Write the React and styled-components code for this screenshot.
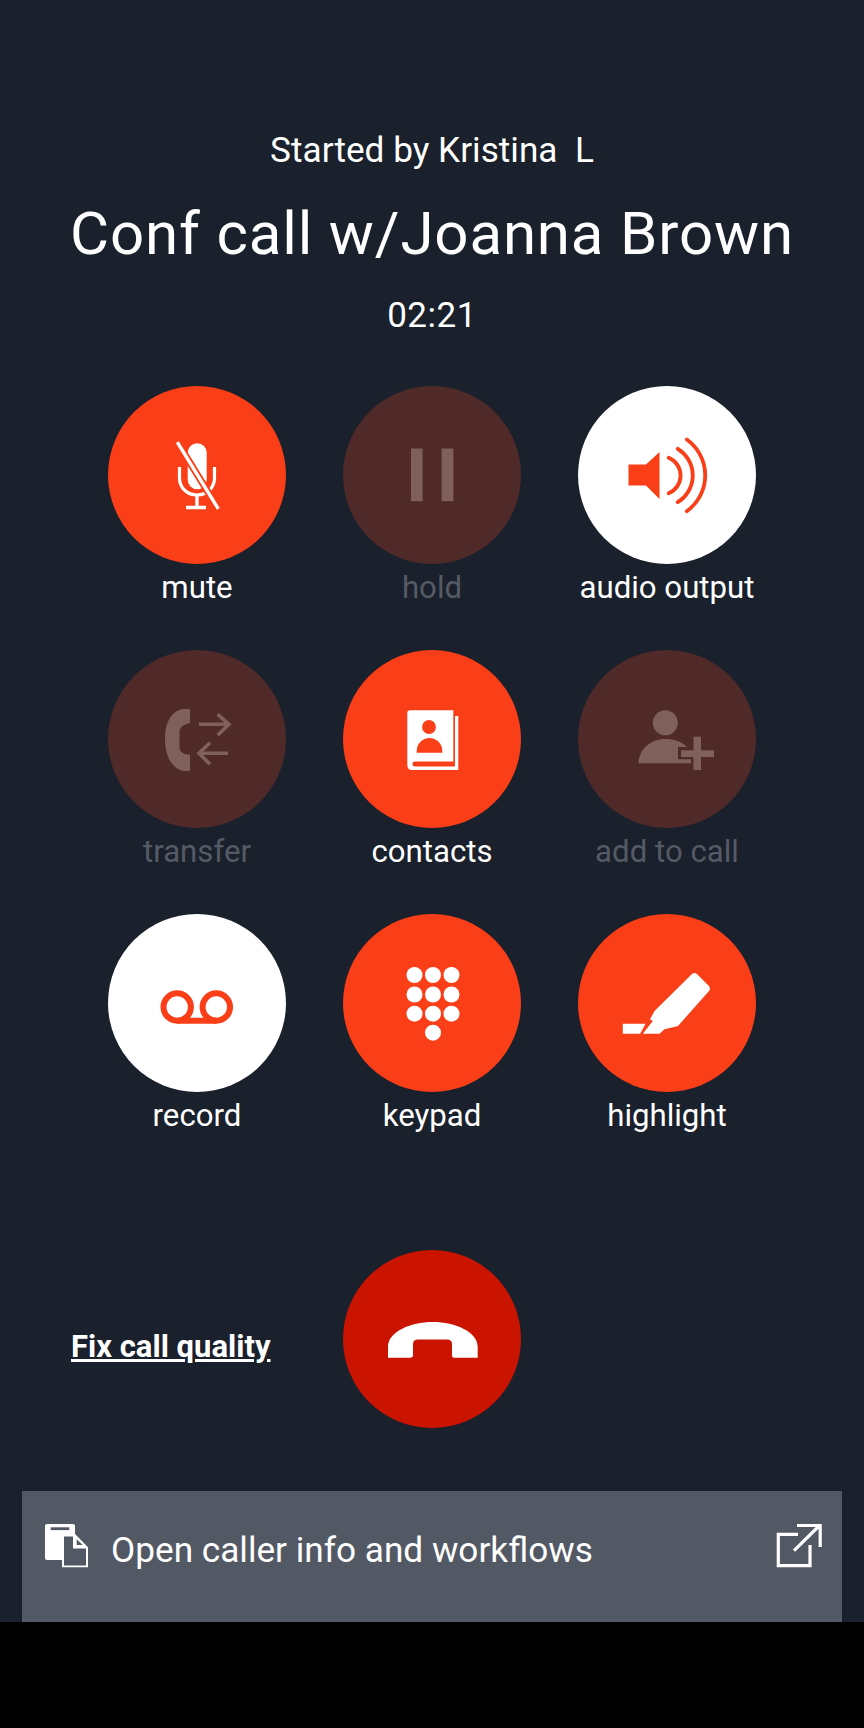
import React from 'react';
import styled, { createGlobalStyle } from 'styled-components';

const ORANGE = '#fa3e17';
const DIM_ICON = '#80605c';
const BAR = '#535964';

const tones = {
  active: { bg: ORANGE, fg: '#fff' },
  on: { bg: '#fff', fg: ORANGE },
  off: { bg: '#4f2a28', fg: DIM_ICON },
  end: { bg: '#cb1400', fg: '#fff' },
};

const Global = createGlobalStyle`
  html, body { margin: 0; padding: 0; background: #000; }
  body { font-family: Roboto, "Liberation Sans", sans-serif; }
`;

const Page = styled.div`
  width: 864px;
  height: 1728px;
  display: flex;
  flex-direction: column;
  background: #000;
  overflow: hidden;
`;

const Screen = styled.div`
  height: 1622px;
  display: flex;
  flex-direction: column;
  background: #1a202c;
  color: #fff;
`;

const Header = styled.header`
  display: flex;
  flex-direction: column;
  align-items: center;
  padding-top: 130px;
  height: 256px;
`;

const Starter = styled.div`
  font-size: 35.2px;
  line-height: 40px;
  white-space: pre;
`;

const Title = styled.h1`
  margin: 29px 0 0;
  font-size: 60px;
  line-height: 70px;
  font-weight: 400;
  letter-spacing: 0.85px;
`;

const Timer = styled.div`
  margin-top: 27px;
  font-size: 35px;
  line-height: 40px;
  letter-spacing: 0.5px;
`;

const Grid = styled.div`
  display: grid;
  grid-template-columns: repeat(3, 178px);
  grid-auto-rows: 264px;
  column-gap: 57px;
  justify-content: center;
`;

const Cell = styled.div`
  display: flex;
  flex-direction: column;
  align-items: center;
`;

const Circle = styled.div`
  width: 178px;
  height: 178px;
  flex: none;
  border-radius: 50%;
  display: flex;
  align-items: center;
  justify-content: center;
  background: ${(p) => tones[p.$tone].bg};
  color: ${(p) => tones[p.$tone].fg};
`;

const Label = styled.div`
  margin-top: 4px;
  font-size: 31.2px;
  line-height: 40px;
  white-space: nowrap;
  color: ${(p) => (p.$dim ? '#555a65' : '#fff')};
`;

const CallRow = styled.div`
  margin-top: 72px;
  display: grid;
  grid-template-columns: 1fr 178px 1fr;
  align-items: center;
`;

const FixLink = styled.a`
  justify-self: start;
  margin: 15px 0 0 71px;
  font-size: 31px;
  line-height: 40px;
  font-weight: 700;
  color: #fff;
  text-decoration: underline;
`;

const InfoBar = styled.div`
  margin: 63px 22px 0;
  height: 131px;
  box-sizing: border-box;
  padding: 19px 12px 0 8px;
  display: flex;
  align-items: flex-start;
  background: ${BAR};
`;

const InfoText = styled.span`
  flex: 1;
  margin-left: 11px;
  font-size: 35.2px;
  line-height: 80px;
`;

const Glyph = styled.svg`
  display: block;
  flex: none;
  overflow: visible;
`;

const Icon = ({ children }) => (
  <Glyph width="100" height="100" viewBox="0 0 100 100" fill="currentColor">
    {children}
  </Glyph>
);

const MicOff = () => (
  <Icon>
    <rect x="40.7" y="18.2" width="19" height="46" rx="9.5" />
    <path d="M32.5 42v11c0 10 8 17 17.5 17s17.5-7 17.5-17V42" fill="none" stroke="currentColor" strokeWidth="3.2" />
    <path d="M50 70v12M39 82.5h20" fill="none" stroke="currentColor" strokeWidth="3.4" />
    <path d="M30.3 17.2L71.3 83.8" stroke={ORANGE} strokeWidth="7" />
    <path d="M30.3 17.2L71.3 83.8" stroke="currentColor" strokeWidth="3.4" />
  </Icon>
);

const Pause = () => (
  <Icon>
    <rect x="29" y="23.5" width="11.6" height="52.7" />
    <rect x="59.6" y="23.5" width="11.8" height="52.7" />
  </Icon>
);

const Speaker = () => (
  <Icon>
    <path d="M11.5 39.5H29L42.5 27v47L29 60.5H11.5z" />
    <path
      d="M51.8 32.8A19.2 19.2 0 0 1 51.8 68.2M60.8 23.8A31.3 31.3 0 0 1 60.8 77.2M69.8 14.5A44.1 44.1 0 0 1 69.8 86.2"
      fill="none"
      stroke="currentColor"
      strokeWidth="3.8"
      strokeLinecap="round"
    />
  </Icon>
);

const Transfer = () => (
  <Icon>
    <path d="M43 21V34l-5 1.5q-5 2.5-5.500 6.500V59q.5 4 5.500 6l5 1V81q0 1-2 1H36C24 79 18 66 18 50S24 22 36 20h5q2 0 2 1z" />
    <path
      d="M52 35.300H82M70.700 25.300L82 35.300 70.700 46.300M81 64.300H52M63 53.700L52 64.300 63 75.300"
      fill="none"
      stroke="currentColor"
      strokeWidth="3.600"
    />
  </Icon>
);

const Contacts = () => (
  <Icon>
    <path d="M28 21.3H71.3V72.5H33a2.5 2.5 0 0 0 0 5H73V27h3.3V81H30q-4.7 0-4.7-5V24q0-2.7 2.7-2.7z" />
    <circle cx="47" cy="38" r="6.9" fill={ORANGE} />
    <path d="M34.7 63.7V62a12.8 13 0 0 1 25.6 0v1.7z" fill={ORANGE} />
  </Icon>
);

const AddPerson = () => (
  <Icon>
    <circle cx="48.3" cy="33.8" r="12.5" />
    <path d="M21.5 74.3C22 60 34 50 48 50c8 0 16 2 22 8H61v12.3H74v4z" />
    <rect x="64" y="61.3" width="33" height="6.8" />
    <rect x="76.5" y="47.7" width="7.5" height="33.3" />
  </Icon>
);

const Voicemail = () => (
  <Icon>
    <g fill="none" stroke="currentColor" strokeWidth="6">
      <circle cx="30.2" cy="54" r="13.7" />
      <circle cx="69.3" cy="54" r="13.7" />
      <path d="M30.2 67.7H69.3" />
    </g>
  </Icon>
);

const keypadDots = [
  [32.5, 22], [51, 22], [69.5, 22],
  [32.5, 41.5], [51, 41.5], [69.5, 41.5],
  [32.5, 60.7], [51, 60.7], [69.5, 60.7],
  [51, 79.7],
];

const Keypad = () => (
  <Icon>
    {keypadDots.map(([x, y]) => (
      <circle key={`${x}-${y}`} cx={x} cy={y} r="8" />
    ))}
  </Icon>
);

const Highlighter = () => (
  <Icon>
    <path d="M5.8 70.7H28.5L23.2 80.7H5.8z" />
    <path d="M75 21q2.5-2 5 0l12 12q2 3 0 5L61 73l-13.5 3.3-5 4.4H25.8L35.8 68l-2.8-1.7 4.5-8.3z" />
  </Icon>
);

const HangUp = () => (
  <Icon>
    <path d="M6 66V58C6 43 28 33 50.8 33S95.7 43 95.7 58V68.8H72q-2 0-2-2.8V55q0-4.5-5-4.5H36q-5 0-5 4.5V66q0 2.8-3 2.8H6z" />
  </Icon>
);

const DocsIcon = () => (
  <Glyph width="70" height="70" viewBox="0 0 70 70" fill="#fff">
    <path d="M17 14H43q2 0 2 2V50H17q-2 0-2-2V16q0-2 2-2z" />
    <rect x="20.7" y="17.3" width="18.6" height="2.8" fill={BAR} />
    <path d="M32 24H45L58 37.3V57.3H32z" />
    <path d="M34 26.5H43V38.5H56V55.5H34z" fill={BAR} />
    <path d="M46.7 29.3V35H52.7z" fill={BAR} />
  </Glyph>
);

const ExternalIcon = () => (
  <Glyph width="70" height="70" viewBox="0 0 70 70" fill="none" stroke="#fff" strokeWidth="3.2">
    <path d="M38 24.300H18.300V55.700H50V35" />
    <path d="M34 40.700L59 16M37 15.500H60.200V37" />
  </Glyph>
);

const buttons = [
  { label: 'mute', tone: 'active', icon: MicOff },
  { label: 'hold', tone: 'off', icon: Pause },
  { label: 'audio output', tone: 'on', icon: Speaker },
  { label: 'transfer', tone: 'off', icon: Transfer },
  { label: 'contacts', tone: 'active', icon: Contacts },
  { label: 'add to call', tone: 'off', icon: AddPerson },
  { label: 'record', tone: 'on', icon: Voicemail },
  { label: 'keypad', tone: 'active', icon: Keypad },
  { label: 'highlight', tone: 'active', icon: Highlighter },
];

export default function App() {
  return (
    <Page>
      <Global />
      <Screen>
        <Header>
          <Starter>Started by Kristina  L</Starter>
          <Title>Conf call w/Joanna Brown</Title>
          <Timer>02:21</Timer>
        </Header>
        <Grid>
          {buttons.map(({ label, tone, icon: Glyphs }) => (
            <Cell key={label}>
              <Circle $tone={tone}>
                <Glyphs />
              </Circle>
              <Label $dim={tone === 'off'}>{label}</Label>
            </Cell>
          ))}
        </Grid>
        <CallRow>
          <FixLink>Fix call quality</FixLink>
          <Circle $tone="end">
            <HangUp />
          </Circle>
        </CallRow>
        <InfoBar>
          <DocsIcon />
          <InfoText>Open caller info and workflows</InfoText>
          <ExternalIcon />
        </InfoBar>
      </Screen>
    </Page>
  );
}
